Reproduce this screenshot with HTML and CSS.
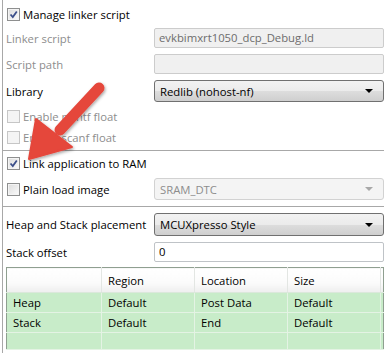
FILE: index.html
```html
<!DOCTYPE html>
<html lang="en">
<head>
    <meta charset="UTF-8">
    <title>Linker settings</title>
    <link rel="stylesheet" href="styles.css">
</head>
<body>
    <div class="panel">
        <div class="check-row">
            <span class="box checked"><svg viewBox="0 0 9 9"><path d="M1.5 4.5 L3.8 7 L7.8 1.5" /></svg></span>
            <span>Manage linker script</span>
        </div>

        <div class="field-row mt-7">
            <span class="label disabled">Linker script</span>
            <div class="input readonly">evkbimxrt1050_dcp_Debug.ld</div>
        </div>

        <div class="field-row mt-6">
            <span class="label disabled">Script path</span>
            <div class="input readonly"></div>
        </div>

        <div class="field-row mt-6 tall">
            <span class="label">Library</span>
            <div class="select">Redlib (nohost-nf)<span class="caret"></span></div>
        </div>

        <div class="check-row mt-7 disabled">
            <span class="box off"></span>
            <span>Enable printf float</span>
        </div>
        <div class="check-row mt-7 disabled">
            <span class="box off"></span>
            <span>Enable scanf float</span>
        </div>

        <hr class="sep">

        <div class="check-row mt-5">
            <span class="box checked"><svg viewBox="0 0 9 9"><path d="M1.5 4.5 L3.8 7 L7.8 1.5" /></svg></span>
            <span>Link application to RAM</span>
        </div>

        <div class="field-row mt-8 tall">
            <div class="check-row">
                <span class="box"></span>
                <span>Plain load image</span>
            </div>
            <div class="select off">SRAM_DTC<span class="caret"></span></div>
        </div>

        <hr class="sep">

        <div class="field-row mt-6 tall heap">
            <span class="label">Heap and Stack placement</span>
            <div class="select">MCUXpresso Style<span class="caret"></span></div>
        </div>

        <div class="field-row mt-6">
            <span class="label">Stack offset</span>
            <div class="input">0</div>
        </div>

        <table class="grid">
            <thead>
                <tr><th></th><th>Region</th><th>Location</th><th>Size</th><th class="fill"></th></tr>
            </thead>
            <tbody>
                <tr><td>Heap</td><td>Default</td><td>Post Data</td><td>Default</td><td class="fill"></td></tr>
                <tr><td>Stack</td><td>Default</td><td>End</td><td>Default</td><td class="fill"></td></tr>
                <tr class="blank"><td></td><td></td><td></td><td></td><td class="fill"></td></tr>
            </tbody>
        </table>
    </div>

    <svg class="arrow" width="120" height="175" viewBox="0 0 120 175">
        <defs>
            <filter id="shadow" x="-20%" y="-20%" width="140%" height="140%">
                <feDropShadow dx="1" dy="1.5" stdDeviation="1.5" flood-color="#000" flood-opacity="0.35"/>
            </filter>
        </defs>
        <g filter="url(#shadow)" fill="#e5463b" stroke="#e5463b" stroke-linejoin="round">
            <line x1="99" y1="88" x2="60" y2="130" stroke-width="11" stroke-linecap="round"/>
            <polygon points="29,159 36,119 72,147" stroke-width="2"/>
        </g>
    </svg>
</body>
</html>
```

FILE: styles.css
```css
body {
    margin: 0;
    background-color: white;
    font-family: "Segoe UI", "Open Sans", sans-serif;
    font-size: 11.3px;
    color: #000;
}
.panel {
    margin-left: 2px;
    border-left: 1px solid #a8a8a8;
    padding: 7px 4px 5px 3px;
    min-height: 341px;
}
.mt-5 { margin-top: 5px; }
.mt-6 { margin-top: 6px; }
.mt-7 { margin-top: 7px; }
.mt-8 { margin-top: 8px; }

.check-row {
    display: flex;
    align-items: center;
    height: 14px;
    gap: 3px;
    padding-left: 1px;
    white-space: nowrap;
}
.check-row.disabled {
    color: #8d8d8d;
}
.box {
    flex: none;
    width: 11px;
    height: 11px;
    border: 1px solid #8e8f8f;
    background: linear-gradient(135deg, #dcdcdc, #fbfbfb);
    box-shadow: inset 0 0 0 1px #f4f4f4;
    display: flex;
    align-items: center;
    justify-content: center;
}
.box.off {
    border-color: #c6c6c6;
    background: #f4f4f4;
}
.box svg {
    width: 9px;
    height: 9px;
    fill: none;
    stroke: #3c4f8a;
    stroke-width: 1.8;
}

.field-row {
    display: grid;
    grid-template-columns: 148px 1fr;
    align-items: center;
    height: 20px;
}
.field-row.tall {
    height: 22px;
}
.field-row.heap {
    height: 23px;
}
.label {
    white-space: nowrap;
}
.label.disabled {
    color: #8d8d8d;
}
.input {
    height: 20px;
    box-sizing: border-box;
    border: 1px solid #bfc3c7;
    border-radius: 2px;
    padding: 1px 4px;
    line-height: 16px;
    background-color: white;
}
.input.readonly {
    background-color: #f0f0f0;
    border-color: #cccccc;
    color: #6d6d6d;
}
.select {
    height: 100%;
    box-sizing: border-box;
    border: 1px solid #707070;
    border-radius: 3px;
    background: linear-gradient(#f2f2f2 0%, #ebebeb 50%, #dddddd 51%, #cfcfcf 100%);
    padding: 0 5px;
    display: flex;
    align-items: center;
    justify-content: space-between;
}
.select.off {
    background: #f4f4f4;
    border-color: #d2d2d2;
    color: #8d8d8d;
}
.caret {
    width: 0;
    height: 0;
    border-left: 4px solid transparent;
    border-right: 4px solid transparent;
    border-top: 4px solid #000;
    margin-right: 5px;
}
.select.off .caret {
    border-top-color: #a8a8a8;
}

.sep {
    width: 381px;
    margin: 6px 0 0 -3px;
    border: none;
    border-top: 1px solid #a8a8a8;
    height: 0;
}

.grid {
    margin-top: 5px;
    width: 378px;
    border-collapse: collapse;
    border: 1px solid #8f9f90;
    font-size: 11.3px;
}
.grid th {
    height: 24px;
    font-weight: normal;
    text-align: left;
    padding: 0 6px;
    background: linear-gradient(#ffffff 0%, #fbfbfb 60%, #eeeeee 100%);
    border-right: 1px solid #e3e6e3;
    border-bottom: 1px solid #dbe8db;
}
.grid td {
    height: 19px;
    padding: 0 6px;
    background-color: #c8ecc9;
    border-right: 1px solid #e4f3e4;
    border-bottom: 1px solid #e4f3e4;
}
.grid tr.blank td {
    height: 16px;
}
.grid th:nth-child(1), .grid td:nth-child(1) { width: 82px; }
.grid th:nth-child(2), .grid td:nth-child(2) { width: 80px; }
.grid th:nth-child(3), .grid td:nth-child(3) { width: 80px; }
.grid th:nth-child(4), .grid td:nth-child(4) { width: 80px; }
.grid .fill {
    padding: 0;
    border-right: none;
}

.arrow {
    position: absolute;
    left: 0;
    top: 0;
    pointer-events: none;
}
```
